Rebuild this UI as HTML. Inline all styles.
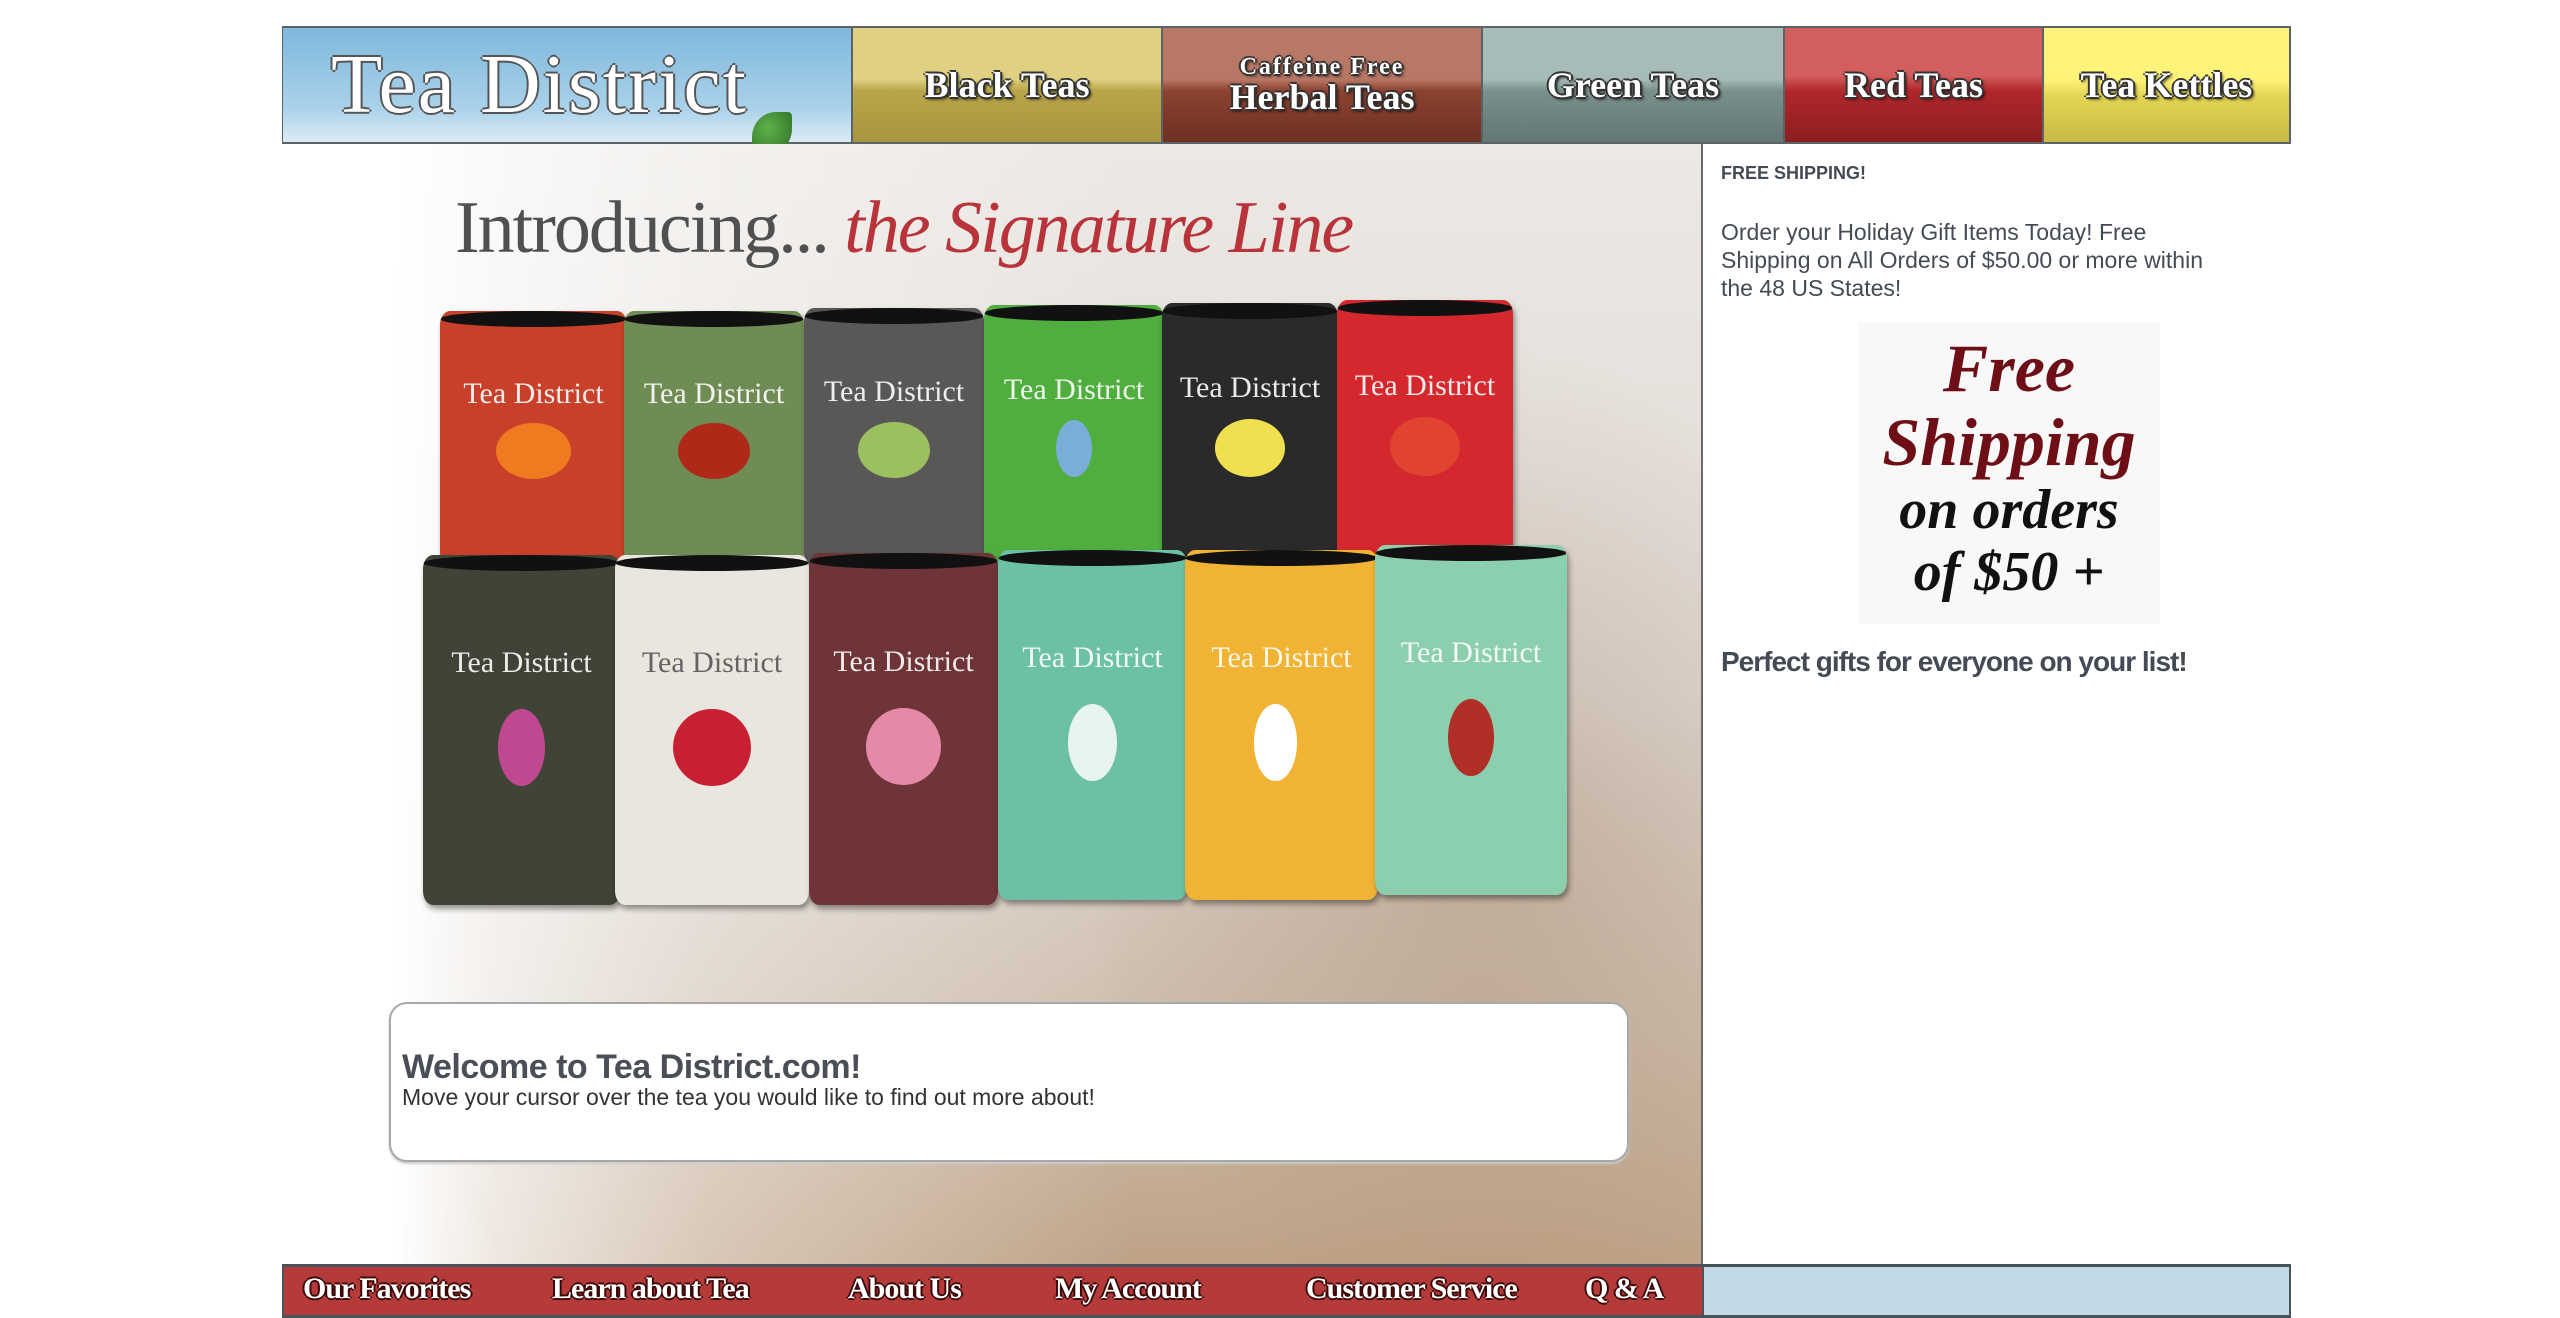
<!DOCTYPE html>
<html><head><meta charset="utf-8"><style>
*{margin:0;padding:0;box-sizing:border-box}
body{width:2560px;height:1318px;background:#fff;position:relative;overflow:hidden;font-family:"Liberation Sans",sans-serif}
.a{position:absolute}
.nav{position:absolute;top:26px;height:118px;border:2px solid #5a6468;border-left-width:1px;border-right-width:1px;display:flex;align-items:center;justify-content:center;color:#fff;font-family:"Liberation Serif",serif;font-weight:bold;font-size:36px;text-shadow:-2px 0 #333,2px 0 #333,0 -2px #333,0 2px #333,2px 2px 3px #000;line-height:1;text-align:center}
.can{position:absolute;border-radius:10px/14px;overflow:hidden;box-shadow:2px 4px 6px rgba(0,0,0,.4)}
.can:before{content:"";position:absolute;left:0;right:0;top:0;height:16px;background:#111;border-radius:50%}
.can span{position:absolute;left:0;right:0;top:26%;text-align:center;color:#fff;font-family:"Liberation Serif",serif;font-size:30px;opacity:.9}
.can i{position:absolute;left:30%;top:44%;width:40%;height:22%;border-radius:50%}
.fn{position:absolute;top:1272px;color:#fff;font-family:"Liberation Serif",serif;font-weight:bold;font-size:30px;text-shadow:-2px 0 #3a0a0a,2px 0 #3a0a0a,0 -2px #3a0a0a,0 2px #3a0a0a;letter-spacing:-1px}
</style></head><body>
<div class="nav" style="left:282px;width:570px;background:linear-gradient(180deg,#7fb8dc,#a9d1ea 70%,#dcecf5);justify-content:flex-start;padding-left:48px;font-size:84px;font-weight:normal;letter-spacing:2px;text-shadow:-2px 0 #555,2px 0 #555,0 -2px #555,0 2px #555">Tea District</div>
<div class="a" style="left:752px;top:112px;width:40px;height:42px;background:radial-gradient(ellipse at 40% 40%,#5fb04a,#2d6e26);border-radius:60% 10% 60% 20%"></div>
<div class="nav" style="left:852px;width:310px;background:linear-gradient(180deg,#dfd181 0,#dfd181 45%,#b9a54a 55%,#a8953e)">Black Teas</div>
<div class="nav" style="left:1162px;width:320px;background:linear-gradient(180deg,#b87866 0,#b87866 45%,#8c4230 55%,#6e3022);flex-direction:column"><span style="font-size:24px;letter-spacing:2px">Caffeine Free</span><span>Herbal Teas</span></div>
<div class="nav" style="left:1482px;width:302px;background:linear-gradient(180deg,#a7bcb8 0,#a7bcb8 45%,#7a908c 55%,#637773)">Green Teas</div>
<div class="nav" style="left:1784px;width:259px;background:linear-gradient(180deg,#d25e5e 0,#d25e5e 42%,#b0272a 55%,#8c1e20)">Red Teas</div>
<div class="nav" style="left:2043px;width:248px;background:linear-gradient(180deg,#fff37a 0,#fff37a 45%,#e3d553 60%,#c8ba44);border-right:2px solid #5a6468">Tea Kettles</div>
<div class="a" style="left:282px;top:144px;width:1420px;height:1123px;background:radial-gradient(ellipse 400px 500px at 1200px 700px,rgba(140,100,70,.3),transparent),linear-gradient(180deg,#ece8e4 0,#e0d9d3 50%,#cdbcab 80%,#bea286 100%)"></div>
<div class="a" style="left:282px;top:144px;width:1420px;height:1123px;background:linear-gradient(90deg,#fff 0,#fff 8%,rgba(255,255,255,.75) 15%,rgba(255,255,255,.4) 30%,rgba(255,255,255,0) 60%)"></div>
<div class="a" style="left:1701px;top:144px;width:2px;height:1123px;background:#6a6a6a"></div>
<div class="a" style="left:455px;top:186px;font-family:'Liberation Serif',serif;font-size:74px;color:#505050;letter-spacing:-2px;white-space:nowrap">Introducing... <span style="color:#b8333a;font-style:italic">the Signature Line</span></div>
<div class="can" style="left:440px;top:311px;width:187px;height:255px;background:#c8402a"><span>Tea District</span><i style="background:#f07a20"></i></div>
<div class="can" style="left:624px;top:311px;width:180px;height:255px;background:#6f8c55"><span>Tea District</span><i style="background:#b02818"></i></div>
<div class="can" style="left:804px;top:308px;width:180px;height:258px;background:#5a5856"><span>Tea District</span><i style="background:#9cc060"></i></div>
<div class="can" style="left:984px;top:305px;width:180px;height:261px;background:#4fae3e"><span>Tea District</span><i style="background:#7aaed8;width:20%;left:40%"></i></div>
<div class="can" style="left:1162px;top:303px;width:176px;height:263px;background:#2a2a2a"><span>Tea District</span><i style="background:#f0e050"></i></div>
<div class="can" style="left:1337px;top:300px;width:176px;height:266px;background:#d4282e"><span>Tea District</span><i style="background:#e04430"></i></div>
<div class="can" style="left:423px;top:555px;width:197px;height:350px;background:#3f4437"><span>Tea District</span><i style="background:#c04890;width:24%;left:38%"></i></div>
<div class="can" style="left:615px;top:555px;width:194px;height:350px;background:#e8e6df"><span style="color:#555">Tea District</span><i style="background:#c82030"></i></div>
<div class="can" style="left:809px;top:553px;width:189px;height:352px;background:#6e3438"><span>Tea District</span><i style="background:#e48aa8"></i></div>
<div class="can" style="left:998px;top:550px;width:189px;height:350px;background:#6cc0a6"><span>Tea District</span><i style="background:#e8f4ee;width:26%;left:37%"></i></div>
<div class="can" style="left:1185px;top:550px;width:193px;height:350px;background:#f0b334"><span style="color:#fff">Tea District</span><i style="background:#fff;width:22%;left:36%"></i></div>
<div class="can" style="left:1375px;top:545px;width:192px;height:350px;background:#8ccfae"><span>Tea District</span><i style="background:#b03028;width:24%;left:38%"></i></div>
<div class="a" style="left:389px;top:1002px;width:1240px;height:160px;background:#fff;border:2px solid #a8a8a8;border-radius:18px;box-shadow:0 2px 2px #ccc"></div>
<div class="a" style="left:402px;top:1048px;font-size:34px;font-weight:bold;color:#4a4e57;white-space:nowrap;letter-spacing:-0.5px">Welcome to Tea District.com!</div>
<div class="a" style="left:402px;top:1084px;font-size:23px;color:#333;white-space:nowrap">Move your cursor over the tea you would like to find out more about!</div>
<div class="a" style="left:1721px;top:163px;font-size:18px;font-weight:bold;color:#444b55">FREE SHIPPING!</div>
<div class="a" style="left:1721px;top:218px;font-size:23px;line-height:28px;color:#444b55;white-space:nowrap">Order your Holiday Gift Items Today! Free<br>Shipping on All Orders of $50.00 or more within<br>the 48 US States!</div>
<div class="a" style="left:1858px;top:322px;width:302px;height:302px;background:#f8f8f8;text-align:center;font-family:'Liberation Serif',serif;font-style:italic;font-weight:bold;line-height:1">
<div style="color:#6e0e16;font-size:68px;margin-top:12px">Free</div>
<div style="color:#6e0e16;font-size:68px;margin-top:6px">Shipping</div>
<div style="color:#111;font-size:56px;margin-top:6px">on orders</div>
<div style="color:#111;font-size:56px;margin-top:6px">of $50 +</div></div>
<div class="a" style="left:1721px;top:646px;font-size:28px;font-weight:bold;color:#444b55;letter-spacing:-1px;white-space:nowrap">Perfect gifts for everyone on your list!</div>
<div class="a" style="left:282px;top:1264px;width:2009px;height:54px;background:#4a525a"></div>
<div class="a" style="left:284px;top:1267px;width:1418px;height:48px;background:#b53a3a"></div>
<div class="a" style="left:1704px;top:1267px;width:585px;height:48px;background:#c2dae5"></div>
<div class="fn" style="left:303px">Our Favorites</div>
<div class="fn" style="left:552px">Learn about Tea</div>
<div class="fn" style="left:848px">About Us</div>
<div class="fn" style="left:1055px">My Account</div>
<div class="fn" style="left:1306px">Customer Service</div>
<div class="fn" style="left:1585px">Q &amp; A</div>
</body></html>
